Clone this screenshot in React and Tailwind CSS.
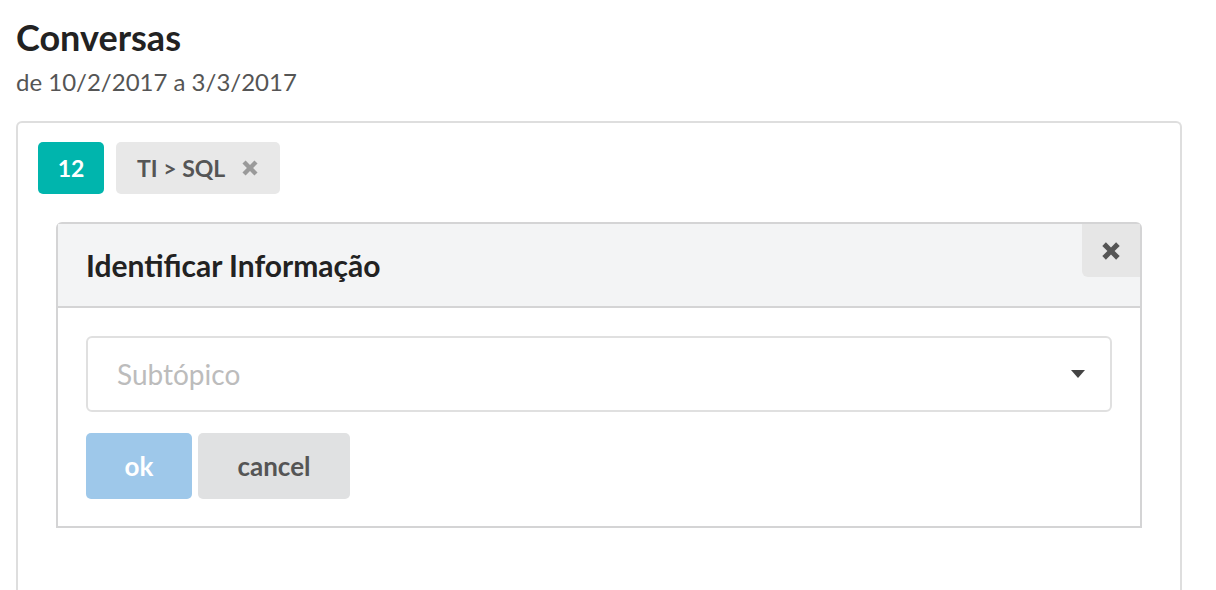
import React from "react";

function XIcon({ className }) {
  return (
    <svg viewBox="0 0 20 20" className={className} fill="currentColor">
      <path d="M4.2 6.6 6.6 4.2 10 7.6 13.4 4.2 15.8 6.6 12.4 10 15.8 13.4 13.4 15.8 10 12.4 6.6 15.8 4.2 13.4 7.6 10Z" />
    </svg>
  );
}

export default function App() {
  return (
    <div
      className="h-[590px] bg-white px-4 pt-[15px] overflow-hidden"
      style={{ fontFamily: "Lato, 'Open Sans', sans-serif" }}
    >
      <h1 className="text-[36px] leading-[44px] font-bold text-[#222]">Conversas</h1>
      <p className="text-[24px] leading-[30px] text-[#555] mt-[8px]">de 10/2/2017 a 3/3/2017</p>

      <div className="mt-[24px] w-[1166px] h-[469px] border-2 border-b-0 border-[#dedede] rounded-t-[6px] pl-[20px] pt-[19px]">
        <div className="flex items-center gap-3">
          <span className="w-[66px] h-[52px] rounded-[5px] bg-[#00b5ad] text-white font-bold text-[23px] flex items-center justify-center">
            12
          </span>
          <span className="h-[52px] w-[164px] rounded-[5px] bg-[#e8e8e8] text-[#555] font-bold text-[23px] flex items-center pl-[21px] gap-[12px]">
            TI &gt; SQL
            <XIcon className="w-[26px] h-[26px] text-[#9a9a9a]" />
          </span>
        </div>

        <div className="mt-[28px] ml-[18px] w-[1086px] border-2 border-[#d4d4d5] rounded-t-[6px]">
          <div className="relative h-[84px] bg-[#f3f4f5] border-b-2 border-[#d4d4d5] flex items-center pl-[28px]">
            <h2 className="text-[30px] font-bold text-[#222]">Identificar Informação</h2>
            <button className="absolute top-0 right-0 w-[58px] h-[53px] bg-[#e6e6e6] rounded-bl-[6px] flex items-center justify-center text-[#555]">
              <XIcon className="w-[30px] h-[30px]" />
            </button>
          </div>
          <div className="px-[28px] pt-[28px] pb-[27px]">
            <div className="h-[76px] border-2 border-[#e0e0e0] rounded-[6px] flex items-center justify-between pl-[29px] pr-[25px]">
              <span className="text-[28px] text-[#bcbcbc]">Subtópico</span>
              <svg viewBox="0 0 14 8" className="w-[14px] h-[8px] text-[#444]" fill="currentColor">
                <path d="M0 0H14L7 8Z" />
              </svg>
            </div>
            <div className="flex gap-[6px] mt-[21px]">
              <button className="w-[106px] h-[66px] rounded-[5px] bg-[#9ec8ea] text-white font-bold text-[26px]">ok</button>
              <button className="w-[152px] h-[66px] rounded-[5px] bg-[#e0e1e2] text-[#555] font-bold text-[26px]">cancel</button>
            </div>
          </div>
        </div>
      </div>
    </div>
  );
}
